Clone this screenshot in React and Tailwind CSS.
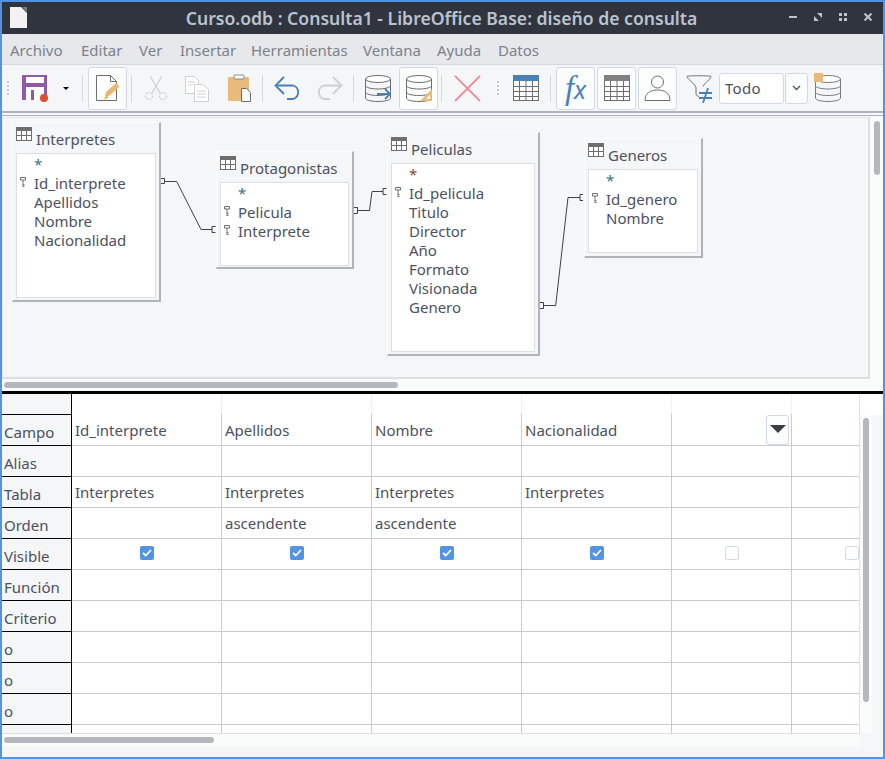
import React from 'react';

const FONT = "font-['Noto_Sans','Open_Sans',sans-serif]";

const menus = [
  ['Archivo', 'w-[71px]'],
  ['Editar', 'w-[58px]'],
  ['Ver', 'w-[41px]'],
  ['Insertar', 'w-[71px]'],
  ['Herramientas', 'w-[112px]'],
  ['Ventana', 'w-[74px]'],
  ['Ayuda', 'w-[61px]'],
  ['Datos', 'w-[60px]'],
];

function Sep({ className = '' }) {
  return <div className={`w-px h-[27px] bg-[#d5d8dd] shrink-0 ${className}`} />;
}

function Grip({ className = '' }) {
  return (
    <div className={`flex flex-col gap-[2px] shrink-0 ${className}`}>
      <div className="w-[2px] h-[2px] bg-[#c4c7cc]" />
      <div className="w-[2px] h-[2px] bg-[#c4c7cc]" />
      <div className="w-[2px] h-[2px] bg-[#c4c7cc]" />
      <div className="w-[2px] h-[2px] bg-[#c4c7cc]" />
    </div>
  );
}

function ToggleBtn({ children, className = '' }) {
  return (
    <div className={`w-[39px] h-[43px] shrink-0 flex items-center justify-center bg-[#fbfcfc] border border-[#d3d8e6] rounded-[3px] ${className}`}>
      {children}
    </div>
  );
}

function SaveIcon() {
  return (
    <svg width="28" height="28" viewBox="0 0 28 28" className="shrink-0">
      <path d="M1 1h25v25H1z" fill="#8e5ba6" />
      <rect x="5" y="3" width="18" height="6" fill="#fff" />
      <rect x="5" y="13" width="18" height="13" fill="#fff" />
      <rect x="10" y="16" width="3" height="10" fill="#8e5ba6" />
      <circle cx="23" cy="24" r="4" fill="#d9502e" />
    </svg>
  );
}

function NewDocIcon() {
  return (
    <svg width="26" height="28" viewBox="0 0 26 28">
      <path d="M1.500 1.500h14l6 6v19h-20z" fill="#fff" stroke="#6e6e6e" />
      <path d="M15.500 1.500v6h6" fill="none" stroke="#6e6e6e" />
      <path d="M10 22l1-4L21 9l3.500 3.500L14 22z" fill="#e8b96e" />
      <path d="M9 26l1.500-5 3.500 2.500z" fill="#e8b96e" />
    </svg>
  );
}

function ScissorsIcon() {
  return (
    <svg width="24" height="26" viewBox="0 0 24 26" fill="none" stroke="#cfcfcf" strokeWidth="1.200">
      <path d="M6 1l10 17M18 1L8 18" />
      <circle cx="5" cy="21" r="3.500" strokeDasharray="2 1" />
      <circle cx="19" cy="21" r="3.500" strokeDasharray="2 1" />
    </svg>
  );
}

function CopyIcon() {
  return (
    <svg width="26" height="27" viewBox="0 0 26 27" fill="#fff" stroke="#d0d0d0">
      <path d="M1.500 1.500h9l4 4v13h-13z" />
      <path d="M10.500 9.500h9l5 5v12h-14z" />
      <path d="M4 7h7M4 10h5M13 16h9M13 19h9M13 22h9" fill="none" />
    </svg>
  );
}

function PasteIcon() {
  return (
    <svg width="25" height="28" viewBox="0 0 25 28">
      <path d="M2 3h19a1 1 0 0 1 1 1v23H2a1 1 0 0 1-1-1V4a1 1 0 0 1 1-1z" fill="#e8bb7c" />
      <rect x="7" y="1" width="10" height="4" rx="1" fill="#fff" stroke="#8a8a8a" />
      <path d="M14.500 14.500h5l4 4v9h-9z" fill="#fff" stroke="#6e6e6e" />
    </svg>
  );
}

function UndoIcon({ color = '#4a80b8', flip = false }) {
  return (
    <svg width="28" height="24" viewBox="0 0 28 24" fill="none" stroke={color} strokeWidth="1.800" className={flip ? '-scale-x-100' : ''}>
      <path d="M10 1L1.500 9.500 10 18" />
      <path d="M2 9.500h17a7 7 0 0 1 0 13.500h-6" />
    </svg>
  );
}

function Db({ children, stroke = '#6e6e6e' }) {
  return (
    <svg width="28" height="28" viewBox="0 0 28 28" fill="none" stroke={stroke}>
      <ellipse cx="14" cy="5" rx="12.500" ry="3.500" fill="#fff" />
      <path d="M1.500 5v19c0 2 5.500 3.500 12.500 3.500S26.500 26 26.500 24V5" />
      <path d="M1.500 11.500c0 2 5.500 3.500 12.500 3.500s12.500-1.500 12.500-3.500M1.500 18c0 2 5.500 3.500 12.500 3.500S26.500 20 26.500 18" />
      {children}
    </svg>
  );
}

function CrossIcon() {
  return (
    <svg width="27" height="27" viewBox="0 0 27 27" stroke="#ee8e9b" strokeWidth="1.800">
      <path d="M1 1l25 25M26 1L1 26" />
    </svg>
  );
}

function TableIcon({ head }) {
  return (
    <svg width="26" height="26" viewBox="0 0 26 26" className="shrink-0">
      <rect x="0.500" y="0.500" width="25" height="25" fill="#fff" stroke="#6e6e6e" />
      <rect x="0" y="0" width="26" height="6" fill={head} />
      <path d="M0 11.500h26M0 16.500h26M0 21.500h26M6.500 6v20M13 6v20M19.500 6v20" stroke="#6e6e6e" />
    </svg>
  );
}

function PersonIcon() {
  return (
    <svg width="27" height="26" viewBox="0 0 27 26" fill="#fff" stroke="#6e6e6e">
      <circle cx="13.500" cy="7" r="6" />
      <path d="M1 25.500c0-7 5-10.500 12.500-10.500S26 18.500 26 25.500z" />
    </svg>
  );
}

function FilterIcon() {
  return (
    <svg width="27" height="29" viewBox="0 0 27 29" fill="none">
      <path d="M1 2.500c0-1 24-1 24 0 0 2.500-6 6-8 10M1 2.500c0 2.500 7 6 9 11v7l3 2.500" stroke="#6e6e6e" />
      <path d="M13 19h13M13 24h13M22 14l-5 15" stroke="#4a80b8" strokeWidth="1.800" />
    </svg>
  );
}

function Toolbar() {
  return (
    <div className="h-[46px] bg-[#f5f6f7] flex items-center shrink-0">
      <Grip className="ml-[5px]" />
      <div className="ml-[12px]"><SaveIcon /></div>
      <div className="ml-[14px] w-0 h-0 border-x-[3px] border-x-transparent border-t-[3px] border-t-black" />
      <Sep className="ml-[13px]" />
      <ToggleBtn className="ml-[5px]"><NewDocIcon /></ToggleBtn>
      <Sep className="ml-[4px]" />
      <div className="ml-[12px]"><ScissorsIcon /></div>
      <div className="ml-[16px]"><CopyIcon /></div>
      <div className="ml-[17px]"><PasteIcon /></div>
      <Sep className="ml-[10px]" />
      <div className="ml-[11px]"><UndoIcon /></div>
      <div className="ml-[13px]"><UndoIcon color="#cfcfcf" flip /></div>
      <Sep className="ml-[10px]" />
      <div className="ml-[10px]">
        <Db>
          <path d="M13 20h13M21 15l5 5-5 5" stroke="#4a80b8" strokeWidth="1.800" />
        </Db>
      </div>
      <ToggleBtn className="ml-[7px]">
        <Db>
          <path d="M15 27L27 15v12z" fill="#e8bb7c" stroke="none" />
          <path d="M21 25l4-4v4z" fill="#fff" stroke="none" />
        </Db>
      </ToggleBtn>
      <Sep className="ml-[3px]" />
      <div className="ml-[12px]"><CrossIcon /></div>
      <Grip className="ml-[16px]" />
      <div className="ml-[14px]"><TableIcon head="#4a80b8" /></div>
      <Sep className="ml-[11px]" />
      <ToggleBtn className="ml-[5px]">
        <span className="font-['Liberation_Serif',serif] italic text-[#4a80b8] text-[33px] leading-none">
          f<span className="text-[25px] font-['Noto_Sans',sans-serif]">x</span>
        </span>
      </ToggleBtn>
      <ToggleBtn className="ml-[2px]"><TableIcon head="#808080" /></ToggleBtn>
      <ToggleBtn className="ml-[2px]"><PersonIcon /></ToggleBtn>
      <div className="ml-[9px]"><FilterIcon /></div>
      <div className="ml-[6px] w-[65px] h-[31px] bg-white border border-[#d3d8e6] rounded-[3px] pl-[5px] pt-[1px] flex items-center text-[15px] text-[#4b5162] tracking-[0.3px]">
        Todo
      </div>
      <div className="ml-[1px] w-[23px] h-[31px] bg-[#fbfcfc] border border-[#d3d8e6] rounded-[3px] flex items-center justify-center">
        <svg width="9" height="6" viewBox="0 0 9 6" fill="none" stroke="#4b5162" strokeWidth="1.300"><path d="M1 1l3.500 3.500L8 1" /></svg>
      </div>
      <div className="ml-[6px] relative">
        <Db stroke="#7a7a7a" />
        <div className="absolute left-0 -top-[1px] w-[9px] h-[9px] bg-[#e8bb7c]" />
      </div>
    </div>
  );
}

function KeyIcon() {
  return (
    <svg width="6" height="11" viewBox="0 0 6 11" fill="none" stroke="#6e6e6e" className="absolute left-[-14px] top-[3px]">
      <path d="M0.500 0.500h5v2.500h-5zM3 3v7M3 7.500h1.500M3 9.500h1.500" />
    </svg>
  );
}

function TableWindow({ title, pos, starColor, rows, keys, listH }) {
  return (
    <div className={`absolute ${pos} bg-[#f5f6f7] border-t border-l border-[#fbfcfc] border-r-2 border-b-2 border-r-[#b1b3b9] border-b-[#b1b3b9] pl-[3px] pr-[3px] pt-[4px] flex flex-col`}>
      <div className="h-[26px] flex items-start shrink-0">
        <svg width="16" height="14" viewBox="0 0 16 14" className="shrink-0">
          <rect x="0.500" y="0.500" width="15" height="13" fill="#fff" stroke="#6e6e6e" />
          <rect x="0" y="0" width="16" height="4" fill="#6e6e6e" />
          <path d="M0 8.500h16M5.500 4v10M10.500 4v10" stroke="#6e6e6e" />
        </svg>
        <span className="ml-[4px] text-[15px] leading-[20px] mt-[2px] text-[#4b5162]">{title}</span>
      </div>
      <div className={`bg-white border border-[#dcdfe3] ${listH} pl-[17px] pt-[1px] text-[15px] leading-[19px] text-[#4b5162]`}>
        <div className={`h-[19px] ${starColor}`}>*</div>
        {rows.map((r, i) => (
          <div key={r} className="h-[19px] relative whitespace-nowrap">
            {i < keys && <KeyIcon />}
            {r}
          </div>
        ))}
      </div>
    </div>
  );
}

function DesignCanvas() {
  return (
    <div className="relative flex-1 bg-[#f5f6f7] border-b-2 border-r-2 border-[#dcdfe3] shadow-[inset_1px_1px_0_#e6e8eb] overflow-hidden">
      <svg width="868" height="262" className="absolute left-0 top-0" fill="none" stroke="#3f4146">
        <path d="M159 61.500h3.500v5h-3.500" />
        <path d="M163 64.500h11.700l24.300 48h11" />
        <path d="M213.500 109.500h-3.500v6h3.500" />
        <path d="M352 90.500h3.500v6h-3.500" />
        <path d="M356 93.500h11.500l2.500-19h11" />
        <path d="M384.500 71.500h-3.500v6h3.500" />
        <path d="M538 185.500h3.500v6h-3.500" />
        <path d="M542 188.500h11.700l12.300-108h12" />
        <path d="M581 77.500h-3v6h3" />
      </svg>
      <TableWindow
        title="Interpretes"
        pos="left-[10px] top-[5px] w-[149px] h-[180px]"
        starColor="text-[#3d7288]"
        rows={['Id_interprete', 'Apellidos', 'Nombre', 'Nacionalidad']}
        keys={1}
        listH="h-[145px]"
      />
      <TableWindow
        title="Protagonistas"
        pos="left-[214px] top-[34px] w-[138px] h-[118px]"
        starColor="text-[#3d7288]"
        rows={['Pelicula', 'Interprete']}
        keys={2}
        listH="h-[84px]"
      />
      <TableWindow
        title="Peliculas"
        pos="left-[385px] top-[15px] w-[153px] h-[224px]"
        starColor="text-[#8a4a3a]"
        rows={['Id_pelicula', 'Titulo', 'Director', 'Año', 'Formato', 'Visionada', 'Genero']}
        keys={1}
        listH="h-[189px]"
      />
      <TableWindow
        title="Generos"
        pos="left-[582px] top-[21px] w-[119px] h-[120px]"
        starColor="text-[#3d7288]"
        rows={['Id_genero', 'Nombre']}
        keys={1}
        listH="h-[84px]"
      />
    </div>
  );
}

const fieldRows = [
  { label: 'Campo', cells: ['Id_interprete', 'Apellidos', 'Nombre', 'Nacionalidad'] },
  { label: 'Alias', cells: [] },
  { label: 'Tabla', cells: ['Interpretes', 'Interpretes', 'Interpretes', 'Interpretes'] },
  { label: 'Orden', cells: ['', 'ascendente', 'ascendente', ''] },
  { label: 'Visible', checks: true },
  { label: 'Función', cells: [] },
  { label: 'Criterio', cells: [] },
  { label: 'o', cells: [] },
  { label: 'o', cells: [] },
  { label: 'o', cells: [] },
  { label: '', cells: [] },
];

const colClass = [
  'w-[150px]',
  'w-[150px]',
  'w-[150px]',
  'w-[150px]',
  'w-[120px]',
  'w-[68px]',
];

function Check({ on, className = '' }) {
  if (on) {
    return (
      <div className={`w-[14px] h-[14px] rounded-[2px] bg-[#5294e2] flex items-center justify-center ${className}`}>
        <svg width="10" height="8" viewBox="0 0 10 8" fill="none" stroke="#fff" strokeWidth="1.800"><path d="M1 4l2.800 2.500L9 1" /></svg>
      </div>
    );
  }
  return <div className={`w-[14px] h-[14px] rounded-[2px] bg-white border border-[#d3d8e6] ${className}`} />;
}

function QueryGrid() {
  return (
    <div className="w-[857px] overflow-hidden bg-white text-[15px] text-[#4b5162]">
      <div className="flex h-[20px]">
        <div className="w-[70px] bg-[#f5f6f7] border-r border-black shrink-0" />
        {colClass.map((c, i) => (
          <div key={i} className={`${c} shrink-0 border-r border-[#f0f1f2] last:border-r-0`} />
        ))}
      </div>
      {fieldRows.map((row, ri) => (
        <div key={ri} className="flex h-[31px]">
          <div className="w-[70px] shrink-0 bg-[#f5f6f7] border-r border-t border-black pl-[2px] pt-[7px] leading-[20px]">
            {row.label}
          </div>
          {colClass.map((c, ci) => (
            <div
              key={ci}
              className={`${c} shrink-0 relative border-r border-[#cccccc] last:border-r-0 ${ri === 0 ? 'pt-[6px]' : 'border-t border-t-[#cccccc] pt-[5px]'} pl-[3px] leading-[20px] whitespace-nowrap`}
            >
              {row.checks ? (
                <Check
                  on={ci < 4}
                  className={ci >= 4 ? 'absolute left-[53px] top-[7px]' : 'absolute left-[68px] top-[7px]'}
                />
              ) : (
                row.cells[ci]
              )}
              {ri === 0 && ci === 4 && (
                <div className="absolute left-[94px] top-[1px] w-[23px] h-[30px] bg-[#fbfcfc] border border-[#d3d8e6] rounded-[3px] flex items-center justify-center">
                  <div className="w-0 h-0 border-x-[8px] border-x-transparent border-t-[8px] border-t-[#3b3c40] -mt-[2px]" />
                </div>
              )}
            </div>
          ))}
        </div>
      ))}
    </div>
  );
}

export default function App() {
  return (
    <div className={`w-[885px] h-[759px] border-2 border-[#5294e2] bg-[#f5f6f7] flex flex-col overflow-hidden ${FONT}`}>
      <div className="h-[32px] bg-[#2f343f] shrink-0 relative flex items-center justify-center">
        <svg width="17" height="21" viewBox="0 0 17 21" className="absolute left-[8px] top-[5px]">
          <path d="M0 0h11l6 6v15H0z" fill="#f2f2f2" />
          <path d="M12 0l5 5V0z" fill="#7d7d7d" />
        </svg>
        <span className="text-[#bac3cf] text-[17.6px] font-semibold ml-[-2px]">Curso.odb : Consulta1 - LibreOffice Base: diseño de consulta</span>
        <div className="absolute left-[787px] top-0 h-[30px] flex items-center gap-[17px]">
          <div className="w-[8px] h-[2px] bg-[#bac3cf]" />
          <svg width="8" height="8" viewBox="0 0 8 8" fill="#bac3cf"><path d="M3 0h5v5zM0 3l5 5H0z" /></svg>
          <svg width="8" height="8" viewBox="0 0 8 8" fill="#bac3cf"><path d="M0 0h3v3H0zM5 0h3v3H5zM0 5h3v3H0zM5 5h3v3H5z" /></svg>
          <svg width="8" height="8" viewBox="0 0 8 8" stroke="#bac3cf" strokeWidth="2"><path d="M0.500 0.500l7 7M7.500 0.500l-7 7" /></svg>
        </div>
      </div>
      <div className="h-[31px] bg-[#e7e8eb] border-b border-[#d3d7de] shrink-0 flex items-center pl-[8px] pt-[2px] text-[15px] text-[#7c818c]">
        {menus.map(([m, w]) => (
          <span key={m} className={w}>{m}</span>
        ))}
      </div>
      <Toolbar />
      <div className="h-[2px] bg-[#aeb2bc] shrink-0" />
      <div className="h-[2px] bg-[#f5f6f7] shrink-0" />
      <div className="h-px bg-[#aeb2bc] shrink-0" />
      <div className="flex-1 min-h-0 flex flex-col">
        <div className="h-px bg-[#f5f6f7] shrink-0" />
        <div className="h-[274px] flex shrink-0">
          <div className="flex-1 flex flex-col min-w-0">
            <DesignCanvas />
            <div className="h-[12px] bg-[#fafbfb] shrink-0 flex items-center pl-[2px]">
              <div className="w-[394px] h-[6px] rounded-full bg-[#b6b7bc]" />
            </div>
          </div>
          <div className="w-[13px] bg-[#fafbfb] shrink-0 pl-[4px] pt-[4px]">
            <div className="w-[6px] h-[54px] rounded-full bg-[#b6b7bc]" />
          </div>
        </div>
        <div className="h-[3px] bg-black shrink-0" />
        <div className="flex-1 min-h-0 flex">
          <div className="w-[858px] flex flex-col shrink-0">
            <div className="h-[339px] overflow-hidden border-r border-[#dcdfe3] flex shrink-0">
              <QueryGrid />
            </div>
            <div className="h-[13px] bg-[#fafbfb] border-t border-[#dcdfe3] shrink-0 flex items-center pl-[2px]">
              <div className="w-[210px] h-[6px] rounded-full bg-[#b6b7bc]" />
            </div>
          </div>
          <div className="flex-1 flex flex-col min-w-0">
            <div className="h-[21px] bg-white shrink-0" />
            <div className="w-[12px] h-[318px] bg-[#fafbfb] shrink-0 pl-[3px] pt-[3px]">
              <div className="w-[6px] h-[284px] rounded-full bg-[#b6b7bc]" />
            </div>
          </div>
        </div>
      </div>
    </div>
  );
}
